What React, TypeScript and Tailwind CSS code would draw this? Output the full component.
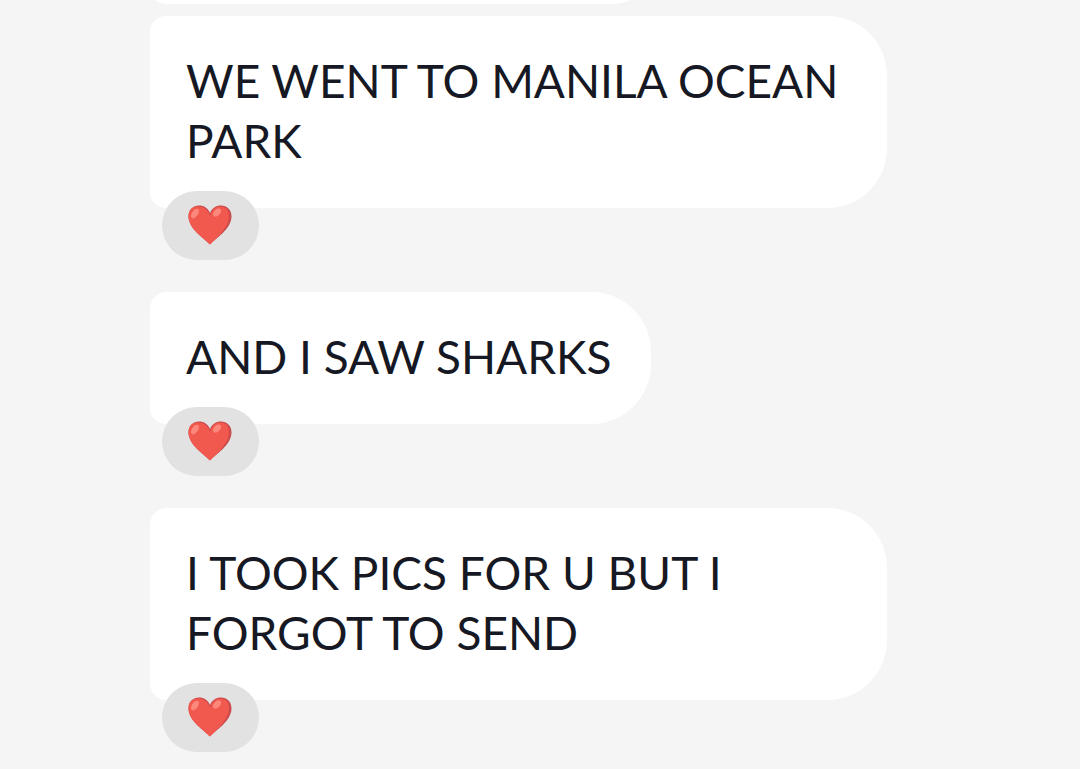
import { useId } from "react";

type Message = {
    id: number;
    text: string;
    hearts: number;
};

const MESSAGES: Message[] = [
    { id: 1, text: "WE WENT TO MANILA OCEAN PARK", hearts: 1 },
    { id: 2, text: "AND I SAW SHARKS", hearts: 1 },
    { id: 3, text: "I TOOK PICS FOR U BUT I FORGOT TO SEND", hearts: 1 },
];

function HeartIcon() {
    const clipId = useId();

    return (
        <svg viewBox="0 0 44 40" className="w-11 h-10" aria-hidden="true">
            <defs>
                <clipPath id={clipId}>
                    <path d="M22 39.500C17 34 0.500 24 0.500 11.500C0.500 4.500 5 0.500 11 0.500C16 0.500 20 3 22 8C24 3 28 0.500 33 0.500C39 0.500 43.500 4.500 43.500 11.500C43.500 24 27 34 22 39.500Z" />
                </clipPath>
            </defs>
            <g clipPath={`url(#${clipId})`}>
                <rect width="44" height="40" fill="#cb4b4c" />
                <path d="M22 40C14 33 -1 26 -1 11C-1 4 5 1.500 11 1.500C16 1.500 20 5 22 11C24 5 27 1.500 32 1.500C38 1.500 41 5 41 11C41 23 28 33 22 40Z" fill="#f1584e" />
            </g>
            <ellipse cx="7" cy="8.500" rx="3" ry="5.500" transform="rotate(35 7 8.500)" fill="#fb887b" />
            <ellipse cx="29" cy="7.500" rx="3" ry="4.800" transform="rotate(42 29 7.500)" fill="#fb887b" />
        </svg>
    );
}

function MessageBubble({ message }: { message: Message }) {
    return (
        <li className="flex flex-col items-start">
            <p className="max-w-[737px] pl-9 pr-10 pt-[35px] pb-[37px] bg-white rounded-l-2xl rounded-r-[60px] text-[46px] leading-[60px] text-[#161823]">
                {message.text}
            </p>

            {/* Reaction, hangs over the bottom edge of the bubble */}
            {message.hearts > 0 && (
                <button
                    type="button"
                    aria-label="Heart reaction"
                    className="relative -mt-[17px] ml-3 pl-[26px] pr-[27px] pt-3.5 pb-[15px] bg-[#e2e2e2] rounded-full cursor-pointer"
                >
                    <HeartIcon />
                </button>
            )}
        </li>
    );
}

export default function App() {
    return (
        <main className="min-h-screen overflow-hidden bg-[#f5f5f5] border-b border-white pl-[150px] pr-12 font-['Lato',sans-serif]">
            {/* Tail end of the previous message */}
            <div className="-mt-32 mb-3 h-[132px] max-w-[520px] bg-white rounded-l-2xl rounded-r-[60px]" />

            <ul className="flex flex-col gap-8">
                {MESSAGES.map((message) => (
                    <MessageBubble key={message.id} message={message} />
                ))}
            </ul>
        </main>
    );
}
